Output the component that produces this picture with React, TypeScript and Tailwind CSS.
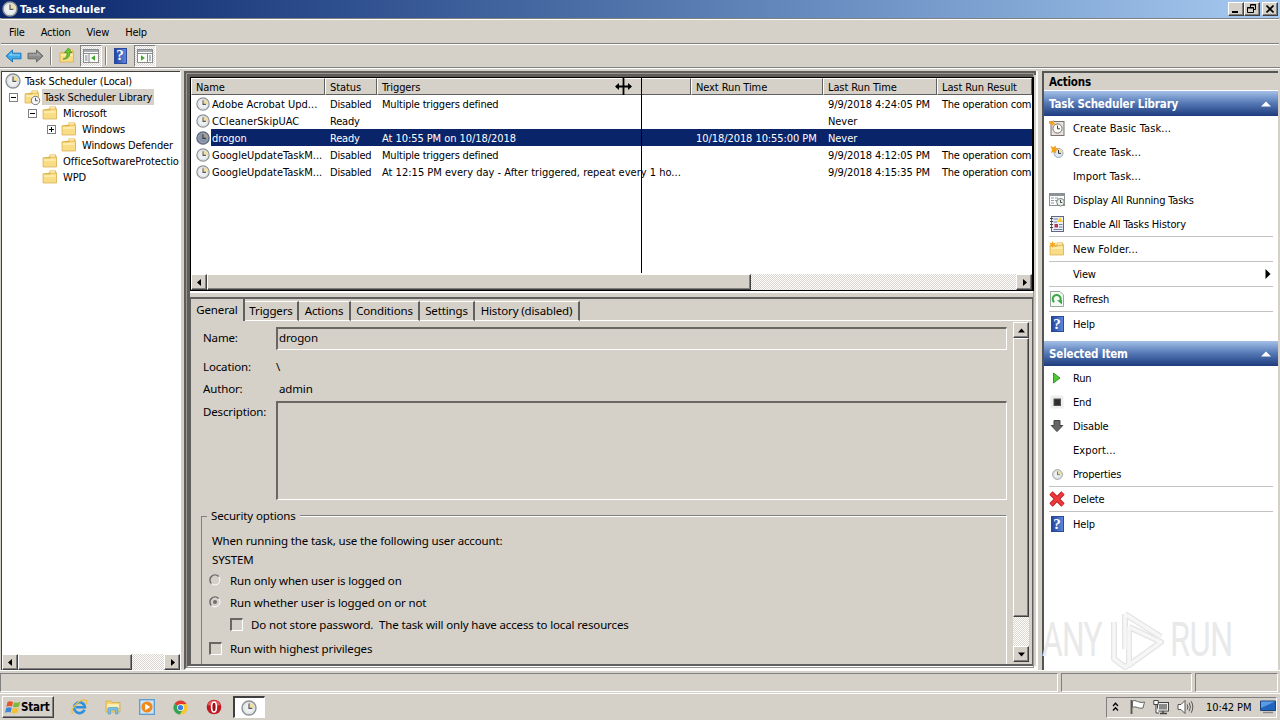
import type { ReactNode } from "react";

const raised =
  "bg-[#d5d0c8] border border-t-white border-l-white border-r-[#404040] border-b-[#404040] shadow-[inset_-1px_-1px_0_#808080]";
const sunken =
  "border border-t-[#808080] border-l-[#808080] border-r-white border-b-white";
const dither =
  "bg-[repeating-conic-gradient(#ffffff_0_25%,#d9d5ce_0_50%)] bg-[length:2px_2px]";

const ClockIcon = ({ size = 16, dark = false }: { size?: number; dark?: boolean }) => (
  <svg width={size} height={size} viewBox="0 0 16 16" className="shrink-0">
    <circle cx="8" cy="8" r="7" fill={dark ? "#8a93a6" : "#eef0f0"} stroke={dark ? "#5a6478" : "#8d9196"} strokeWidth="1.4" />
    <path d="M8 8V2.3A5.7 5.7 0 0 1 13.7 8Z" fill={dark ? "#a49f8c" : "#f3dfa0"} />
    <circle cx="8" cy="8" r="5.4" fill="none" stroke={dark ? "#9aa4b8" : "#cfd6dc"} strokeWidth=".7" />
    <path d="M8 3.6V8.4H11.4" fill="none" stroke={dark ? "#2f3a54" : "#555b66"} strokeWidth="1.2" />
  </svg>
);

const FolderIcon = ({ badge }: { badge?: "clock" | "star" | "up" }) => (
  <svg width="16" height="16" viewBox="0 0 16 16" className="shrink-0 overflow-visible">
    <path d="M1 4.5L7.5 3.5V1.5L13.5 1.2L14.5 3V13.5H1Z" fill="#e9bf58" />
    <path d="M8.5 2.2H13V4H8.5Z" fill="#fff6d2" />
    <path d="M1 5H8L9 4H14.5V14H1Z" fill="#f8dc86" stroke="#d9ab48" strokeWidth=".7" />
    <path d="M2 6H13.5V8H2Z" fill="#fdeba9" />
    {badge === "clock" && (
      <g>
        <circle cx="11.5" cy="11.5" r="4.2" fill="#f4f5f4" stroke="#777d84" />
        <path d="M11.5 8.8V11.7H13.6" fill="none" stroke="#555" />
      </g>
    )}
    {badge === "star" && <path d="M3.5 0L4.5 2.2L7 1.5L5.6 3.6L7 5.6L4.5 5L3.5 7L2.7 5L0 5.6L1.6 3.6L0 1.5L2.7 2.2Z" fill="#f6a81c" />}
    {badge === "up" && <path d="M4 11C7.5 10.5 8 7 8 4.5H5.5L9.5 0L13 4.5H10.8C11 8 9 11.5 4 11Z" fill="#6cc436" stroke="#3c8c1c" strokeWidth=".7" />}
  </svg>
);

const HelpIcon = () => (
  <span className="flex h-[16px] w-[13px] shrink-0 items-center justify-center border border-[#2c4a9c] bg-[#3f66c8] bg-linear-to-r from-[#2546a0] to-[#5f86dc] font-['Liberation_Serif',serif] text-[15px] leading-none font-bold text-white">
    ?
  </span>
);

const PaneIcon = ({ flip = false }: { flip?: boolean }) => (
  <svg width="16" height="14" viewBox="0 0 16 14">
    <rect x=".5" y=".5" width="15" height="13" fill="#fbfbf8" stroke="#8a8d90" />
    <path d="M1 1H15V3H1Z" fill="#a7abb0" />
    <path d="M1 4.5H15" stroke="#8a8d90" />
    {flip ? (
      <g>
        <path d="M10.5 5V13" stroke="#8a8d90" />
        <path d="M12 7H14M12 9H14M12 11H14" stroke="#6c7a9a" />
        <path d="M4 6.2L7.8 9L4 11.8Z" fill="#3fa52c" />
      </g>
    ) : (
      <g>
        <path d="M6 5V13" stroke="#8a8d90" />
        <path d="M2 7H4.5M2 9H4.5M2 11H4.5" stroke="#6c7a9a" />
        <path d="M12 6.2L8.2 9L12 11.8Z" fill="#3fa52c" />
      </g>
    )}
  </svg>
);

const ArrowIcon = ({ right = false }: { right?: boolean }) => (
  <svg width="17" height="14" viewBox="0 0 17 14" className={right ? "-scale-x-100" : ""}>
    <path
      d="M1 7L7.5 1V4.2H16V9.8H7.5V13Z"
      fill={right ? "#8c8c8c" : "#3fa9e6"}
      stroke={right ? "#6a6a6a" : "#1c78bc"}
    />
    <path d="M3.5 6.5L6.8 3.5V5.5H15V6.6Z" fill={right ? "#adadad" : "#8fd4f8"} />
  </svg>
);

const Triangle = ({ dir }: { dir: "left" | "right" | "up" | "down" }) => {
  const points = {
    left: "6,1 6,8 2,4.5",
    right: "3,1 3,8 7,4.5",
    up: "1,6.5 8,6.5 4.5,2.5",
    down: "1,2.5 8,2.5 4.5,6.5",
  };
  return (
    <svg width="9" height="9" viewBox="0 0 9 9">
      <polygon points={points[dir]} fill="#000" />
    </svg>
  );
};

const ScrollButton = ({ dir }: { dir: "left" | "right" | "up" | "down" }) => (
  <div className={`flex h-4 w-4 shrink-0 items-center justify-center ${raised}`}>
    <Triangle dir={dir} />
  </div>
);

/* ---------- title, menu and toolbar ---------- */

const TitleBar = () => (
  <div className="flex h-[18px] shrink-0 items-center bg-linear-to-r from-[#0a246a] to-[#a6caf0] pr-[2px] pl-[2px]">
    <ClockIcon />
    <span className="ml-[2px] text-[11px] font-bold tracking-[0.1px] text-white">Task Scheduler</span>
    <div className="ml-auto flex">
      <div className={`flex h-[14px] w-4 items-end justify-center pb-[2px] ${raised}`}>
        <div className="mr-[2px] h-[2px] w-[6px] bg-black" />
      </div>
      <div className={`flex h-[14px] w-4 items-center justify-center ${raised}`}>
        <svg width="10" height="10" viewBox="0 0 10 10" fill="none" stroke="#000">
          <path d="M3.5 3.5V.5H8.5V5.5H6.5M3 1H9M.5 3.5H6.5V8.5H.5ZM0 4H7" />
        </svg>
      </div>
      <div className={`ml-[2px] flex h-[14px] w-4 items-center justify-center ${raised}`}>
        <svg width="8" height="8" viewBox="0 0 8 8" stroke="#000" strokeWidth="1.6">
          <path d="M.5 .5L7.5 7.5M7.5 .5L.5 7.5" />
        </svg>
      </div>
    </div>
  </div>
);

const ToolButton = ({ active = false, children }: { active?: boolean; children: ReactNode }) => (
  <div
    className={`flex h-[22px] w-[22px] items-center justify-center ${active ? `${sunken} ${dither}` : ""}`}
  >
    {children}
  </div>
);

const Toolbar = () => (
  <div className="flex h-[24px] shrink-0 items-center border-b border-[#808080] pl-[2px] shadow-[0_1px_0_#fff]">
    <ToolButton><ArrowIcon /></ToolButton>
    <ToolButton><ArrowIcon right /></ToolButton>
    <div className="mx-[4px] h-[18px] w-[2px] border-r border-l border-l-[#808080] border-r-white" />
    <ToolButton><FolderIcon badge="up" /></ToolButton>
    <div className="ml-[2px]"><ToolButton active><PaneIcon /></ToolButton></div>
    <div className="mr-[2px] ml-[3px] h-[18px] w-[2px] border-r border-l border-l-[#808080] border-r-white" />
    <ToolButton><HelpIcon /></ToolButton>
    <div className="ml-[3px]"><ToolButton active><PaneIcon flip /></ToolButton></div>
  </div>
);

/* ---------- tree ---------- */

const Expander = ({ open }: { open: boolean }) => (
  <svg width="9" height="9" viewBox="0 0 9 9" className="shrink-0">
    <rect x=".5" y=".5" width="8" height="8" fill="#fff" stroke="#808080" />
    <path d={open ? "M2 4.5H7" : "M2 4.5H7M4.5 2V7"} stroke="#000" />
  </svg>
);

const TreePane = () => (
  <div className="flex w-[179px] shrink-0 flex-col overflow-hidden border-t border-l border-[#404040] bg-white tracking-[-0.15px]">
    <div className="flex flex-1 flex-col overflow-hidden pt-px whitespace-nowrap">
      <div className="flex h-4 items-center pl-[3px]">
        <ClockIcon />
        <span className="ml-[4px]">Task Scheduler (Local)</span>
      </div>
      <div className="flex h-4 items-center pl-[7px]">
        <Expander open />
        <span className="ml-[6px] flex"><FolderIcon badge="clock" /></span>
        <span className="ml-[2px] bg-[#d5d0c8] px-[2px] pt-px leading-[15px]">Task Scheduler Library</span>
      </div>
      <div className="flex h-4 items-center pl-[26px]">
        <Expander open />
        <span className="ml-[5px] flex"><FolderIcon /></span>
        <span className="ml-[5px]">Microsoft</span>
      </div>
      <div className="flex h-4 items-center pl-[45px]">
        <Expander open={false} />
        <span className="ml-[5px] flex"><FolderIcon /></span>
        <span className="ml-[5px]">Windows</span>
      </div>
      <div className="flex h-4 items-center pl-[59px]">
        <FolderIcon />
        <span className="ml-[5px]">Windows Defender</span>
      </div>
      <div className="flex h-4 items-center pl-[40px]">
        <FolderIcon />
        <span className="ml-[5px] tracking-[-0.02px]">OfficeSoftwareProtectio</span>
      </div>
      <div className="flex h-4 items-center pl-[40px]">
        <FolderIcon />
        <span className="ml-[5px]">WPD</span>
      </div>
    </div>
    <div className={`flex h-4 ${dither}`}>
      <ScrollButton dir="left" />
      <div className={`w-[114px] ${raised}`} />
      <div className="ml-auto"><ScrollButton dir="right" /></div>
    </div>
  </div>
);

/* ---------- task list ---------- */

const columns = [
  { label: "Name", width: "w-[134px]" },
  { label: "Status", width: "w-[52px]" },
  { label: "Triggers", width: "w-[314px]" },
  { label: "Next Run Time", width: "w-[132px]" },
  { label: "Last Run Time", width: "w-[114px]" },
  { label: "Last Run Result", width: "w-[95px]" },
];

const tasks = [
  { name: "Adobe Acrobat Upd...", status: "Disabled", trigger: "Multiple triggers defined", next: "", last: "9/9/2018 4:24:05 PM", result: "The operation com", selected: false },
  { name: "CCleanerSkipUAC", status: "Ready", trigger: "", next: "", last: "Never", result: "", selected: false },
  { name: "drogon", status: "Ready", trigger: "At 10:55 PM on 10/18/2018", next: "10/18/2018 10:55:00 PM", last: "Never", result: "", selected: true },
  { name: "GoogleUpdateTaskM...", status: "Disabled", trigger: "Multiple triggers defined", next: "", last: "9/9/2018 4:12:05 PM", result: "The operation com", selected: false },
  { name: "GoogleUpdateTaskM...", status: "Disabled", trigger: "At 12:15 PM every day - After triggered, repeat every 1 ho...", next: "", last: "9/9/2018 4:15:35 PM", result: "The operation com", selected: false },
];

const TaskList = () => (
  <div className="relative flex h-[214px] shrink-0 flex-col overflow-hidden border border-r-2 border-black bg-white">
    <div className="flex h-[17px] shrink-0">
      {columns.map((col) => (
        <div
          key={col.label}
          className={`${col.width} flex shrink-0 items-center border border-t-white border-l-white border-r-[#606060] border-b-[#606060] bg-[#d5d0c8] pt-[2px] pl-[4px] tracking-[-0.1px] whitespace-nowrap`}
        >
          {col.label}
        </div>
      ))}
    </div>
    {tasks.map((task, i) => (
      <div key={i} className="flex h-[17px] shrink-0 items-center whitespace-nowrap">
        <div className="flex w-5 shrink-0 pl-[5px]">
          <ClockIcon size={14} dark={task.selected} />
        </div>
        <div className={`flex h-full w-[822px] shrink-0 items-center overflow-hidden pt-px ${task.selected ? "bg-[#0a246a] text-white" : ""}`}>
          <div className="w-[119px] shrink-0 pl-[1px] tracking-[0.02px]">{task.name}</div>
          <div className="w-[52px] shrink-0">{task.status}</div>
          <div className={`w-[314px] shrink-0 ${task.trigger.length > 30 ? "tracking-[0.01px]" : task.selected ? "tracking-[-0.06px]" : ""}`}>{task.trigger}</div>
          <div className="w-[132px] shrink-0 tracking-[-0.07px]">{task.next}</div>
          <div className="w-[114px] shrink-0 tracking-[-0.07px]">{task.last}</div>
          <div className="tracking-[-0.25px]">{task.result}</div>
        </div>
      </div>
    ))}
    <div className={`mt-auto flex h-4 shrink-0 ${dither}`}>
      <ScrollButton dir="left" />
      <div className={`w-[544px] ${raised}`} />
      <div className="ml-auto"><ScrollButton dir="right" /></div>
    </div>
    {/* column resize guide and cursor */}
    <div className="absolute top-0 left-[450px] h-[195px] w-px bg-black" />
    <svg width="17" height="17" viewBox="0 0 17 17" className="absolute top-0 left-[424px]">
      <path d="M8.5 0V17M1 8.5H16" stroke="#000" strokeWidth="1.8" />
      <path d="M0 8.5L4 5V12ZM17 8.5L13 5V12Z" />
    </svg>
  </div>
);

/* ---------- task details ---------- */

const tabs = [
  { label: "Triggers", width: "w-[54px]" },
  { label: "Actions", width: "w-[52px]" },
  { label: "Conditions", width: "w-[69px]" },
  { label: "Settings", width: "w-[55px]" },
  { label: "History (disabled)", width: "w-[105px]" },
];

const field = "border-t-2 border-l-2 border-r border-b border-t-[#6a6763] border-l-[#6a6763] border-r-white border-b-white";

const Radio = ({ checked = false }: { checked?: boolean }) => (
  <svg width="12" height="12" viewBox="0 0 12 12" className="shrink-0">
    <circle cx="6" cy="6" r="5" fill="#d5d0c8" stroke="#fff" />
    <path d="M2.4 9.6A5 5 0 0 1 9.6 2.4" fill="none" stroke="#606060" strokeWidth="1.4" />
    {checked && <circle cx="6" cy="6" r="2" fill="#707070" />}
  </svg>
);

const Checkbox = () => <div className={`h-[13px] w-[13px] shrink-0 ${field}`} />;

const DetailPane = () => (
  <div className="flex flex-1 flex-col overflow-hidden border-t-2 border-r-2 border-b-2 border-l border-[#606060] font-['Noto_Sans','Open_Sans',sans-serif] text-[11.5px] tracking-[-0.14px] whitespace-nowrap">
    <div className="flex h-[22px] shrink-0 items-end">
      <div className="flex h-[22px] w-[54px] items-center justify-center border-r-2 border-[#606060] pb-[2px]">General</div>
      {tabs.map((tab) => (
        <div
          key={tab.label}
          className={`${tab.width} flex h-[20px] items-center justify-center border-t border-r-2 border-b border-t-white border-r-[#606060] border-b-white pb-[2px]`}
        >
          {tab.label}
        </div>
      ))}
      <div className="h-px flex-1 bg-white" />
    </div>
    <div className="flex flex-1 overflow-hidden">
      <div className="flex w-[822px] shrink-0 flex-col overflow-hidden pl-[10px]">
        <div className="mt-[6px] flex h-[23px] shrink-0 items-center pr-[6px]">
          <span className="w-[75px] pb-[2px] pl-[2px]">Name:</span>
          <div className={`flex h-full flex-1 items-center pb-[3px] pl-[1px] ${field}`}>drogon</div>
        </div>
        <div className="mt-[5px] flex h-[22px] shrink-0 items-center">
          <span className="w-[75px] pl-[2px]">Location:</span>\
        </div>
        <div className="flex h-[22px] shrink-0 items-center">
          <span className="w-[78px] pl-[2px]">Author:</span>admin
        </div>
        <div className="mt-[2px] flex h-[99px] shrink-0 pr-[6px]">
          <span className="w-[75px] pt-[4px] pl-[2px]">Description:</span>
          <div className={`flex-1 ${field}`} />
        </div>
        <div className="mt-[7px] flex h-[18px] shrink-0 items-center pr-[6px]">
          <div className="mt-[9px] h-[9px] w-[6px] border-t border-l border-[#808080]" />
          <span className="px-[4px] pb-[2px]">Security options</span>
          <div className="h-[2px] flex-1 border-t border-b border-t-[#808080] border-b-white" />
          <div className="mt-[9px] h-[9px] w-px bg-white" />
        </div>
        <div className="mr-[6px] flex flex-1 flex-col border-r border-l border-l-[#808080] border-r-white">
          <div className="mt-[6px] h-[19px] pl-[10px] leading-[19px]">When running the task, use the following user account:</div>
          <div className="h-[19px] pl-[10px] leading-[19px]">SYSTEM</div>
          <div className="flex h-[22px] items-center gap-[9px] pl-[7px]"><Radio />Run only when user is logged on</div>
          <div className="flex h-[22px] items-center gap-[9px] pl-[7px]"><Radio checked />Run whether user is logged on or not</div>
          <div className="flex h-[22px] items-center gap-[8px] pl-[28px] whitespace-pre"><Checkbox />{"Do not store password.  The task will only have access to local resources"}</div>
          <div className="mt-[2px] flex h-[22px] items-center gap-[8px] pl-[7px]"><Checkbox />Run with highest privileges</div>
        </div>
      </div>
      <div className={`mt-px mb-[2px] flex w-4 flex-col ${dither}`}>
        <ScrollButton dir="up" />
        <div className={`h-[279px] ${raised}`} />
        <div className="mt-auto"><ScrollButton dir="down" /></div>
      </div>
    </div>
  </div>
);

/* ---------- actions ---------- */

const BasicTaskIcon = () => (
  <svg width="16" height="16" viewBox="0 0 16 16">
    <rect x="2" y="1.5" width="13" height="14" fill="#e8e2dc" stroke="#77706c" />
    <circle cx="8.5" cy="8.5" r="4.6" fill="#fbfbf8" stroke="#77706c" />
    <path d="M8.5 5.5V8.8H11" fill="none" stroke="#444" />
    <path d="M0 1L3 1.6L5 0L5 3L7 4.5L4 4.6L2.5 7L2 4.5L0 3.5Z" fill="#f3a21d" />
  </svg>
);

const NewTaskIcon = () => (
  <svg width="16" height="16" viewBox="0 0 16 16">
    <circle cx="9.5" cy="9" r="4.5" fill="#dfe9f4" stroke="#8ea4b8" />
    <path d="M9.5 9V5A4 4 0 0 1 13.5 9Z" fill="#f3dfa0" />
    <path d="M9.5 6V9.4H12" fill="none" stroke="#334" />
    <path d="M1.5 2L4.5 3.2L6.5 1.5L7 4L10 4.8L7.2 6.8L7 9.4L4.8 8L2 9L3 6Z" fill="#f3a21d" />
  </svg>
);

const RunningIcon = () => (
  <svg width="16" height="14" viewBox="0 0 16 14">
    <rect x=".5" y=".5" width="15" height="12" fill="#fcfcfa" stroke="#8b9296" />
    <path d="M1 2H15" stroke="#8b9296" strokeWidth="2" />
    <path d="M2 5H5M6 5H9M2 7.5H5M6 7.5H8M2 10H5" stroke="#8b9bb0" />
    <circle cx="11.5" cy="9.2" r="3.8" fill="#eef2ec" stroke="#6f8474" />
    <path d="M11.5 6.8V9.5H13.3" fill="none" stroke="#444" />
  </svg>
);

const HistoryIcon = () => (
  <svg width="14" height="16" viewBox="0 0 14 16">
    <rect x="1.5" y=".5" width="12" height="15" fill="#eceff6" stroke="#5f6880" />
    <path d="M3.5 3H8M3.5 6H7M9 8.5H12.5M9 11H12.5M3.5 13.5H12.5" stroke="#6f7fa8" />
    <path d="M10 1L13 6H7Z" fill="#f2cf2c" />
    <rect x="4.5" y="8" width="3.5" height="3.5" fill="#b8364a" />
    <path d="M0 2.5H3M0 5.5H3M0 8.5H3M0 11.5H3" stroke="#444" />
  </svg>
);

const RefreshIcon = () => (
  <svg width="14" height="16" viewBox="0 0 14 16">
    <path d="M.5 .5H10L13.5 4V15.5H.5Z" fill="#f6faf4" stroke="#98a898" />
    <path d="M4.2 11.2A4 4 0 1 1 9.6 10.8" fill="none" stroke="#39a845" strokeWidth="2" />
    <path d="M7 9.2L12 9V13.5Z" fill="#39a845" />
  </svg>
);

type Action = { label: string; icon?: ReactNode; line?: boolean; submenu?: boolean };

const libraryActions: Action[] = [
  { label: "Create Basic Task...", icon: <BasicTaskIcon /> },
  { label: "Create Task...", icon: <NewTaskIcon /> },
  { label: "Import Task..." },
  { label: "Display All Running Tasks", icon: <RunningIcon /> },
  { label: "Enable All Tasks History", icon: <HistoryIcon />, line: true },
  { label: "New Folder...", icon: <FolderIcon badge="star" />, line: true },
  { label: "View", line: true, submenu: true },
  { label: "Refresh", icon: <RefreshIcon />, line: true },
  { label: "Help", icon: <HelpIcon /> },
];

const itemActions: Action[] = [
  {
    label: "Run",
    icon: (
      <svg width="14" height="14" viewBox="0 0 14 14">
        <path d="M3.5 2L10 7L3.5 12Z" fill="#4fc837" stroke="#2f9c22" />
      </svg>
    ),
  },
  {
    label: "End",
    icon: (
      <svg width="14" height="14" viewBox="0 0 14 14">
        <rect x=".5" y=".5" width="13" height="13" fill="#eeeeee" />
        <rect x="4" y="4" width="6.5" height="6.5" fill="#2d2d2d" stroke="#555" />
      </svg>
    ),
  },
  {
    label: "Disable",
    icon: (
      <svg width="14" height="14" viewBox="0 0 14 14">
        <path d="M4 1.5H10V6.5H12.8L7 12.6L1.2 6.5H4Z" fill="#666" stroke="#444" />
      </svg>
    ),
  },
  { label: "Export..." },
  { label: "Properties", icon: <ClockIcon size={11} />, line: true },
  {
    label: "Delete",
    icon: (
      <svg width="16" height="16" viewBox="0 0 16 16">
        <path d="M2 2L14 14M14 2L2 14" stroke="#b81820" strokeWidth="4.6" />
        <path d="M2 2L14 14M14 2L2 14" stroke="#ee3a3a" strokeWidth="3" />
      </svg>
    ),
    line: true,
  },
  { label: "Help", icon: <HelpIcon /> },
];

const ActionGroup = ({ title, actions }: { title: string; actions: Action[] }) => (
  <div>
    <div className="flex h-[25px] items-center justify-between bg-linear-to-b from-[#a3c0e6] via-[#5477b4] to-[#1e3c7e] pt-px pr-[7px] pl-[5px] text-[11.5px] font-bold tracking-[-0.16px] text-white">
      {title}
      <svg width="10" height="6" viewBox="0 0 10 6">
        <polygon points="5,0.5 10,5.5 0,5.5" fill="#fff" />
      </svg>
    </div>
    {actions.map((action) => (
      <div key={action.label} className={`mr-[5px] ml-[5px] flex items-center ${action.line ? "h-[25px] border-b border-[#c4c2bf]" : "h-6"}`}>
        <span className="flex w-4 shrink-0 justify-center">{action.icon}</span>
        <span className={`ml-[8px] ${action.label.endsWith("...") ? "tracking-[0.1px]" : "tracking-[-0.17px]"}`}>{action.label}</span>
        {action.submenu && (
          <svg width="6" height="10" viewBox="0 0 6 10" className="mr-[2px] ml-auto">
            <polygon points="0.5,0 5.5,5 0.5,10" />
          </svg>
        )}
      </div>
    ))}
  </div>
);

const ActionsPane = () => (
  <div className="flex w-[236px] shrink-0 flex-col border-t-2 border-l-2 border-[#555] bg-white">
    <div className="mb-px flex h-[17px] items-center bg-[#d5d0c8] pt-[2px] pl-[5px] text-[11.5px] font-bold">Actions</div>
    <ActionGroup title="Task Scheduler Library" actions={libraryActions} />
    <div className="h-[5px]" />
    <ActionGroup title="Selected Item" actions={itemActions} />
  </div>
);

/* ---------- taskbar ---------- */

const Taskbar = () => (
  <div className="flex h-[27px] shrink-0 items-center border-t border-white pl-[2px]">
    <div className={`flex h-[22px] w-[52px] items-center pl-[2px] ${raised}`}>
      <svg width="16" height="15" viewBox="0 0 16 15">
        <path d="M2.5 2Q5 .4 8 2L7 6.6Q4 5.4 1.4 7Z" fill="#e8542c" />
        <path d="M9 2.3Q12 3.6 15.3 1.8L14 6.6Q11 8 8 6.8Z" fill="#7cb93a" />
        <path d="M1.2 8Q4 6.5 6.8 7.7L5.6 12.4Q3 11.2 0 12.8Z" fill="#3c86d6" />
        <path d="M7.8 8Q10.8 9.2 13.8 7.7L12.6 12.6Q9.6 14 6.6 12.7Z" fill="#f6c02c" />
      </svg>
      <span className="text-[11.5px] font-bold tracking-[-0.2px]">Start</span>
    </div>
    <div className="ml-[17px] flex items-center gap-[17px]">
      <svg width="17" height="16" viewBox="0 0 17 16">
        <path d="M13.5 10.8A5.4 5.4 0 1 1 13.9 8.2H5" fill="none" stroke="#2f8fdb" strokeWidth="2.6" />
        <path d="M1.6 14.6C-1.6 10 10 -1.6 15.5 1.6C16.6 2.6 15.8 4.2 15 5" fill="none" stroke="#f0bf3a" strokeWidth="1.3" />
      </svg>
      <svg width="16" height="16" viewBox="0 0 16 16">
        <path d="M1 2H6L7 3.5H15V13H1Z" fill="#f2d272" stroke="#d5a944" strokeWidth=".7" />
        <path d="M2 5H14V9H2Z" fill="#fbeeb4" />
        <path d="M3 15V9.5Q3 8.5 4 8.5H12Q13 8.5 13 9.5V15H10.5V11H5.5V15Z" fill="#79bfe8" stroke="#4c93c4" strokeWidth=".6" />
      </svg>
      <svg width="16" height="16" viewBox="0 0 16 16" className="ml-px">
        <rect x=".7" y=".7" width="14.6" height="14.6" fill="#cfe5f6" stroke="#5a9bd0" strokeWidth="1.3" />
        <circle cx="8" cy="8" r="5.6" fill="#f08a1c" />
        <path d="M6.2 4.8L11.2 8L6.2 11.2Z" fill="#fff" />
      </svg>
      <svg width="15" height="15" viewBox="0 0 16 16" className="ml-px">
        <path d="M8 8L1.5 4.2A7.5 7.5 0 0 1 14.5 4.2Z" fill="#e0392d" />
        <path d="M8 8L1.5 4.2A7.5 7.5 0 0 0 7.4 15.5L11 9.7Z" fill="#35a350" />
        <path d="M8 8V4.2H14.5A7.5 7.5 0 0 1 7.4 15.5L11 9.7Z" fill="#f6c829" />
        <circle cx="8" cy="8" r="3.6" fill="#fff" />
        <circle cx="8" cy="8" r="2.8" fill="#3c7de0" />
      </svg>
      <svg width="16" height="16" viewBox="0 0 16 16" className="ml-px">
        <circle cx="8" cy="8" r="7.3" fill="#bf1820" />
        <path d="M1.5 6A7 7 0 0 1 14.5 6Q8 8 1.5 6Z" fill="#e05a5a" />
        <ellipse cx="8" cy="8" rx="2.4" ry="5" fill="#a01018" stroke="#fff" strokeWidth="1.6" />
      </svg>
    </div>
    <div className="ml-[11px] flex h-[22px] w-[32px] items-center justify-center border-t-2 border-l-2 border-r border-b border-t-[#404040] border-l-[#404040] border-r-white border-b-white bg-white pr-px">
      <ClockIcon />
    </div>
    <div className={`mr-[3px] ml-auto flex h-[21px] w-[171px] items-center ${sunken}`}>
      <svg width="7" height="10" viewBox="0 0 7 10" fill="none" stroke="#000" strokeWidth="1.3" className="ml-[5px]">
        <path d="M1 4L3.5 1.3L6 4M1 8.5L3.5 5.8L6 8.5" />
      </svg>
      <svg width="17" height="16" viewBox="0 0 17 16" className="ml-[10px]">
        <path d="M2.5 1V15" stroke="#555" strokeWidth="1.8" />
        <path d="M3.5 2Q6 .8 8.5 2.5Q12 4.2 15.5 3L14 9Q11 9.8 8.3 8.4Q6 7.3 3.5 8.4Z" fill="#fff" stroke="#666" />
      </svg>
      <svg width="16" height="16" viewBox="0 0 16 16" className="ml-[7px]">
        <rect x="4.5" y="3.5" width="11" height="8.5" fill="#8a8a86" stroke="#444" />
        <rect x="5.5" y="4.5" width="9" height="6.5" fill="none" stroke="#eee" />
        <path d="M7 14.5H14M10 12V14" stroke="#444" strokeWidth="1.5" />
        <path d="M.8 1.5H5.2V5.5H.8ZM3 5.5V14H6" fill="#fff" stroke="#444" />
      </svg>
      <svg width="17" height="16" viewBox="0 0 17 16" fill="none" stroke="#555" className="ml-[8px]">
        <path d="M1 5.5H4L8 1.5V14.5L4 10.5H1Z" fill="#fff" />
        <path d="M10.2 5.5Q11.6 8 10.2 10.5M12.2 3.8Q14.6 8 12.2 12.2M14.2 2.2Q17.4 8 14.2 13.8" />
      </svg>
      <span className="ml-[12px] tracking-[-0.1px] whitespace-nowrap">10:42 PM</span>
      <svg width="16" height="14" viewBox="0 0 16 14" className="ml-auto">
        <path d="M.5 1H15.5V10.5H.5Z" fill="#2265bd" stroke="#1a437c" />
        <path d="M1 1.5H15L1 8Z" fill="#5a9ce4" />
        <path d="M3 12.5H13" stroke="#888" strokeWidth="1.4" />
      </svg>
    </div>
  </div>
);

const Watermark = () => (
  <div className="pointer-events-none absolute top-[609px] left-[1042px] flex h-[62px] w-[192px] items-center justify-between font-['Roboto','Open_Sans',sans-serif] text-[48px] leading-none text-[#e9e9e9]">
    <span className="w-[64px] origin-left scale-x-[0.66] tracking-[-1px]">ANY</span>
    <svg width="58" height="62" viewBox="0 0 58 62" fill="none" stroke="#e4e4e4" strokeWidth="6" strokeLinejoin="round" className="absolute left-[65px]">
      <path d="M18 5V40M18 5L54 28M22 18V56L54 33L22 18M7 13V50L18 58L28 52" />
      <path d="M18 5V40M18 5L54 28M22 18V56L54 33L22 18M7 13V50L18 58L28 52" stroke="#f6f6f6" strokeWidth="3.5" />
    </svg>
    <span className="w-[64px] origin-left scale-x-[0.68] tracking-[-1px]">RUN</span>
  </div>
);

export default function App() {
  return (
    <div className="relative flex h-[720px] w-[1280px] flex-col overflow-hidden bg-[#d5d0c8] font-['DejaVu_Sans_Condensed','DejaVu_Sans',sans-serif] text-[11px] leading-[13px] tracking-[-0.2px] text-black">
      <TitleBar />
      <div className="mx-px flex h-[26px] shrink-0 items-center gap-[16px] border-t border-b border-t-[#808080] border-b-[#808080] pt-[2px] pl-[8px] shadow-[inset_0_1px_0_#fff,0_1px_0_#fff]">
        <span>File</span>
        <span>Action</span>
        <span>View</span>
        <span>Help</span>
      </div>
      <Toolbar />
      <div className="mt-[3px] flex h-[599px] shrink-0 pl-px">
        <TreePane />
        <div className="w-[4px] shrink-0 border-l border-white" />
        <div className="flex w-[852px] shrink-0 flex-col border-4 border-r-0 border-[#5f5c59] border-b-white outline-1 -outline-offset-3 outline-[#9a9793]">
          <div className="flex h-full flex-col border-l-2 border-[#5f5c59] bg-[#d5d0c8] pr-[2px]">
            <div className="h-[2px] shrink-0 bg-[#5f5c59]" />
            <TaskList />
            <div className="h-[6px] shrink-0 border-t-2 border-white" />
            <DetailPane />
          </div>
        </div>
        <div className="w-[6px] shrink-0 border-l-2 border-white" />
        <ActionsPane />
      </div>
      <div className="flex h-[23px] shrink-0 gap-[3px] border-t border-white pt-[2px] pr-[2px] pb-px">
        <div className={`flex-1 ${sunken}`} />
        <div className={`w-[131px] ${sunken}`} />
        <div className={`w-[83px] ${sunken}`} />
      </div>
      <Taskbar />
      <Watermark />
    </div>
  );
}
